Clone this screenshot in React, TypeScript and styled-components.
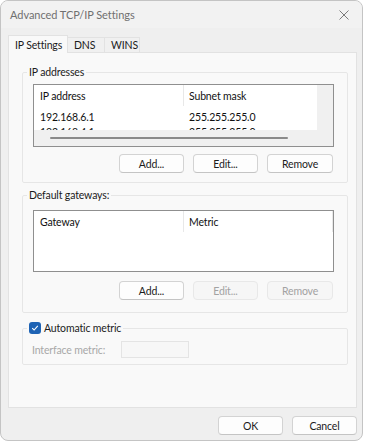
import React from "react";
import styled, { createGlobalStyle } from "styled-components";

const Global = createGlobalStyle`
  html, body { margin: 0; padding: 0; background: #ffffff; }
  body { font-family: Lato, "Noto Sans", sans-serif; font-size: 10.5px; letter-spacing: -0.15px; color: #1b1b1b; }
  * { box-sizing: border-box; }
`;

const Window = styled.div`
  width: 363px;
  height: 441px;
  background: #efefef;
  border: 1px solid #c4c4c4;
  border-radius: 8px;
  overflow: hidden;
  display: flex;
  flex-direction: column;
`;

const TitleBar = styled.div`
  height: 27px;
  display: flex;
  align-items: center;
  justify-content: space-between;
  padding: 0 8px 0 9px;
  background: #f2f2f2;
`;

const Title = styled.span`
  font-size: 11px;
  letter-spacing: -0.05px;
  color: #707070;
`;

const CloseIcon = styled.svg`
  width: 10px;
  height: 10px;
  margin-right: 5px;
`;

const Body = styled.div`
  flex: 1;
  display: flex;
  flex-direction: column;
  padding: 7px 5px 0 7px;
`;

const TabStrip = styled.div`
  display: flex;
  align-items: flex-end;
  height: 18px;
`;

const Tab = styled.div<{ $active?: boolean; $w: number }>`
  height: ${(p) => (p.$active ? 18 : 16)}px;
  width: ${(p) => p.$w}px;
  padding-left: 6px;
  display: flex;
  align-items: center;
  white-space: nowrap;
  background: ${(p) => (p.$active ? "#f9f9f9" : "#f0f0f0")};
  border: 1px solid #e2e2e2;
  border-bottom: ${(p) => (p.$active ? "none" : "1px solid #e2e2e2")};
  margin-left: ${(p) => (p.$active ? 0 : -1)}px;
  position: relative;
  z-index: ${(p) => (p.$active ? 2 : 1)};
  color: #1b1b1b;
`;

const Panel = styled.div`
  height: 356px;
  margin-top: -1px;
  background: #f9f9f9;
  border: 1px solid #e2e2e2;
  padding: 12px 8px 0 13px;
  display: flex;
  flex-direction: column;
`;

const Group = styled.fieldset<{ $gap: number; $top: number; $pt: number; $pb: number }>`
  margin: ${(p) => p.$top}px 0 0 0;
  padding: ${(p) => p.$pt}px 13px ${(p) => p.$pb}px 10px;
  border: 1px solid #e6e6e6;
  border-radius: 2px;
  display: flex;
  flex-direction: column;
  gap: ${(p) => p.$gap}px;
  min-width: 0;
`;

const Legend = styled.legend`
  margin-left: -6px;
  padding: 0 2px;
  line-height: 14px;
  color: #1b1b1b;
  display: flex;
  align-items: center;
  gap: 3px;
`;

const ListView = styled.div<{ $h: number }>`
  height: ${(p) => p.$h}px;
  background: #ffffff;
  border: 1px solid #8f8f8f;
  display: flex;
  flex-direction: column;
  overflow: hidden;
`;

const ListMain = styled.div`
  flex: 1;
  display: flex;
  min-height: 0;
`;

const ListContent = styled.div`
  flex: 1;
  overflow: hidden;
`;

const VScroll = styled.div`
  width: 16px;
  background: #f0f0f0;
`;

const HScroll = styled.div`
  height: 16px;
  background: #f0f0f0;
  display: flex;
  align-items: center;
  padding-left: 16px;
`;

const Thumb = styled.div`
  width: 238px;
  height: 2px;
  border-radius: 1px;
  background: #8a8a8a;
`;

const Row = styled.div<{ $header?: boolean; $cols?: string }>`
  display: grid;
  grid-template-columns: ${(p) => p.$cols ?? "149px 1fr"};
  height: ${(p) => (p.$header ? 21 : 15)}px;
  margin-bottom: ${(p) => (p.$header ? 3 : 0)}px;
  align-items: center;
  color: #111;
`;

const Cell = styled.div<{ $divider?: boolean; $pl?: number }>`
  height: 100%;
  display: flex;
  align-items: center;
  padding-left: ${(p) => p.$pl ?? 6}px;
  border-left: ${(p) => (p.$divider ? "1px solid #e8e8e8" : "none")};
  white-space: nowrap;
`;

const HeaderEnd = styled.div`
  border-right: 1px solid #e8e8e8;
  height: 100%;
  width: 1px;
  justify-self: end;
`;

const ButtonRow = styled.div`
  display: flex;
  justify-content: flex-end;
  gap: 9px;
  margin-right: 1px;
`;

const Button = styled.button<{ $w?: number }>`
  width: ${(p) => p.$w ?? 65}px;
  height: 19px;
  padding: 0;
  font-family: inherit;
  font-size: 10.5px;
  letter-spacing: -0.15px;
  color: #1b1b1b;
  background: #fdfdfd;
  border: 1px solid #d3d3d3;
  border-bottom-color: #c4c4c4;
  border-radius: 4px;
  &:disabled {
    color: #a2a2a2;
    background: #f6f6f6;
    border-color: #e8e8e8;
  }
`;

const CheckBox = styled.span`
  width: 12px;
  height: 12px;
  border-radius: 3px;
  background: #1e63b4;
  display: flex;
  align-items: center;
  justify-content: center;
`;

const MetricRow = styled.div`
  display: flex;
  align-items: center;
  color: #a8a8a8;
  margin-left: -1px;
`;

const MetricLabel = styled.span`
  width: 89px;
`;

const MetricInput = styled.div`
  width: 68px;
  height: 17px;
  border: 1px solid #e4e4e4;
  background: #f7f7f7;
`;

const Footer = styled.div`
  flex: 1;
  display: flex;
  justify-content: flex-end;
  align-items: flex-start;
  gap: 9px;
  padding: 8px 0 0 0;
`;

export default function App() {
  return (
    <>
      <Global />
      <Window>
        <TitleBar>
          <Title>Advanced TCP/IP Settings</Title>
          <CloseIcon viewBox="0 0 10 10">
            <path d="M0.5 0.5 L9.5 9.5 M9.5 0.5 L0.5 9.5" stroke="#7a7a7a" strokeWidth="1" />
          </CloseIcon>
        </TitleBar>
        <Body>
          <TabStrip>
            <Tab $active $w={60}>IP Settings</Tab>
            <Tab $w={38}>DNS</Tab>
            <Tab $w={36}>WINS</Tab>
          </TabStrip>
          <Panel>
            <Group $top={0} $pt={5} $pb={9} $gap={7}>
              <Legend>IP addresses</Legend>
              <ListView $h={63}>
                <ListMain>
                  <ListContent>
                    <Row $header>
                      <Cell>IP address</Cell>
                      <Cell $divider $pl={5}>Subnet mask</Cell>
                    </Row>
                    <Row>
                      <Cell>192.168.6.1</Cell>
                      <Cell>255.255.255.0</Cell>
                    </Row>
                    <Row>
                      <Cell>192.168.4.1</Cell>
                      <Cell>255.255.255.0</Cell>
                    </Row>
                  </ListContent>
                  <VScroll />
                </ListMain>
                <HScroll>
                  <Thumb />
                </HScroll>
              </ListView>
              <ButtonRow>
                <Button>Add...</Button>
                <Button>Edit...</Button>
                <Button $w={66}>Remove</Button>
              </ButtonRow>
            </Group>

            <Group $top={5} $pt={8} $pb={12} $gap={9}>
              <Legend>Default gateways:</Legend>
              <ListView $h={62}>
                <ListContent>
                  <Row $header $cols="149px 1fr 1px">
                    <Cell>Gateway</Cell>
                    <Cell $divider $pl={5}>Metric</Cell>
                    <HeaderEnd />
                  </Row>
                </ListContent>
              </ListView>
              <ButtonRow>
                <Button>Add...</Button>
                <Button disabled>Edit...</Button>
                <Button disabled $w={66}>Remove</Button>
              </ButtonRow>
            </Group>

            <Group $top={8} $pt={6} $pb={6} $gap={0}>
              <Legend>
                <CheckBox>
                  <svg width="8" height="8" viewBox="0 0 8 8">
                    <path d="M1.2 4.2 L3.1 6 L6.8 1.8" fill="none" stroke="#ffffff" strokeWidth="1.1" />
                  </svg>
                </CheckBox>
                Automatic metric
              </Legend>
              <MetricRow>
                <MetricLabel>Interface metric:</MetricLabel>
                <MetricInput />
              </MetricRow>
            </Group>
          </Panel>
          <Footer>
            <Button>OK</Button>
            <Button>Cancel</Button>
          </Footer>
        </Body>
      </Window>
    </>
  );
}
